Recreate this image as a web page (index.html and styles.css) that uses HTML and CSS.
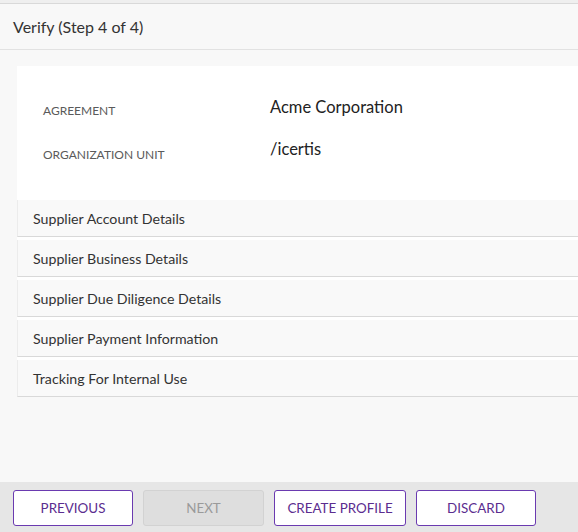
FILE: index.html
```html
<!DOCTYPE html>
<html>
<head>
<meta charset="utf-8">
<link rel="stylesheet" href="styles.css">
</head>
<body>
<div class="page">
  <div class="strip"></div>
  <div class="header">Verify (Step 4 of 4)</div>
  <div class="main">
    <div class="card">
      <div class="field">
        <div class="label">AGREEMENT</div>
        <div class="value">Acme Corporation</div>
      </div>
      <div class="field field-second">
        <div class="label">ORGANIZATION UNIT</div>
        <div class="value">/icertis</div>
      </div>
    </div>
    <div class="sections">
      <div class="section">Supplier Account Details</div>
      <div class="section">Supplier Business Details</div>
      <div class="section">Supplier Due Diligence Details</div>
      <div class="section">Supplier Payment Information</div>
      <div class="section">Tracking For Internal Use</div>
    </div>
  </div>
  <div class="footer">
    <button class="btn">PREVIOUS</button>
    <button class="btn btn-disabled">NEXT</button>
    <button class="btn btn-wide">CREATE PROFILE</button>
    <button class="btn">DISCARD</button>
  </div>
</div>
</body>
</html>
```
FILE: styles.css
```css
html, body {
  margin: 0;
  padding: 0;
}
body {
  background: #f8f8f8;
  font-family: Lato, "Open Sans", sans-serif;
  color: #333;
}
.page {
  width: 578px;
  height: 532px;
  display: flex;
  flex-direction: column;
  overflow: hidden;
}
.strip {
  height: 3px;
  background: #efefef;
  border-bottom: 1px solid #d9d9d9;
  flex: none;
}
.header {
  height: 45px;
  flex: none;
  display: flex;
  align-items: center;
  padding-left: 13px;
  font-size: 16px;
  color: #333;
  border-bottom: 1px solid #e2e2e2;
}
.main {
  flex: 1;
  padding: 16px 0 0 17px;
}
.card {
  background: #fff;
  padding: 20px 0 26px 0;
}
.field {
  display: grid;
  grid-template-columns: 253px 1fr;
  height: 44px;
}
.label {
  padding-left: 26px;
  padding-top: 18px;
  line-height: 14px;
  font-size: 12px;
  color: #5a5a5a;
}
.value {
  padding-top: 11px;
  line-height: 20px;
  font-size: 16.5px;
  color: #222;
}
.field-second .value {
  padding-top: 9px;
}
.sections {
  background: #fff;
  display: flex;
  flex-direction: column;
  gap: 3px;
}
.section {
  height: 36px;
  display: flex;
  align-items: center;
  padding-left: 15px;
  background: #f9f9f9;
  border-left: 1px solid #ececec;
  border-bottom: 1px solid #d9d9d9;
  font-size: 14.2px;
  color: #333;
}
.footer {
  height: 50px;
  flex: none;
  background: #e6e6e6;
  display: flex;
  gap: 10px;
  padding: 8px 0 0 13px;
  box-sizing: border-box;
}
.btn {
  width: 120px;
  height: 36px;
  background: #fff;
  border: 1px solid #6a3ab0;
  border-radius: 3px;
  font-family: Lato, "Open Sans", sans-serif;
  font-size: 13.4px;
  color: #5b2d8f;
  padding: 0;
}
.btn-disabled {
  width: 121px;
  background: #dedede;
  border-color: #d2d2d2;
  color: #9a9a9a;
}
.btn-wide {
  width: 132px;
}
```
